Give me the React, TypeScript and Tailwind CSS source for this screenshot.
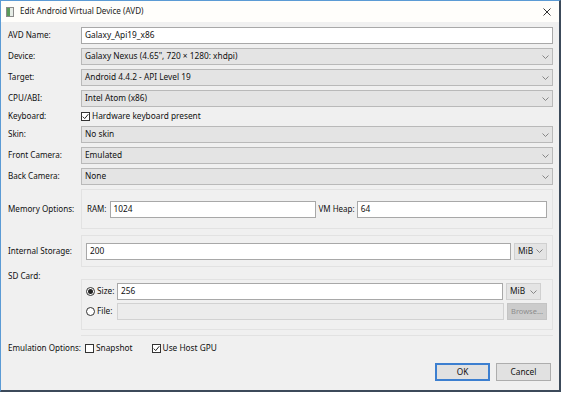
import React from "react";

const font = "font-['Noto_Sans','Liberation_Sans',sans-serif]";

function Chevron() {
  return (
    <svg width="7" height="4" viewBox="0 0 7 4" className="shrink-0">
      <path d="M0.5 0.5 L3.5 3.5 L6.5 0.5" fill="none" stroke="#7a7a7a" strokeWidth="0.9" />
    </svg>
  );
}

function Combo({ value, className = "" }: { value: string; className?: string }) {
  return (
    <div
      className={`h-[17px] border border-[#b9b9b9] bg-[#e4e4e4] flex items-center justify-between pl-[3px] pr-[3px] leading-none ${className}`}
    >
      <span>{value}</span>
      <Chevron />
    </div>
  );
}

function Input({ value = "", disabled = false, className = "" }: { value?: string; disabled?: boolean; className?: string }) {
  return (
    <div
      className={`h-[17px] border flex items-center px-[3px] leading-none ${
        disabled ? "border-[#d2d2d2] bg-[#ececec]" : "border-[#a8a8a8] bg-white"
      } ${className}`}
    >
      {value}
    </div>
  );
}

function Check({ checked, label }: { checked: boolean; label: string }) {
  return (
    <div className="flex items-center gap-[2px]">
      <div className="w-[9px] h-[9px] border border-[#333333] bg-white flex items-center justify-center">
        {checked && (
          <svg width="7" height="7" viewBox="0 0 7 7">
            <path d="M0.7 3.6 L2.7 5.6 L6.3 1.2" fill="none" stroke="#222222" strokeWidth="1" />
          </svg>
        )}
      </div>
      <span>{label}</span>
    </div>
  );
}

function Radio({ checked, label }: { checked: boolean; label: string }) {
  return (
    <div className="flex items-center gap-[2px] w-[31px] shrink-0">
      <div className="w-[9px] h-[9px] rounded-full border border-[#333333] bg-white flex items-center justify-center">
        {checked && <div className="w-[5px] h-[5px] rounded-full bg-[#222222]" />}
      </div>
      <span>{label}</span>
    </div>
  );
}

function Row({ label, children, className = "" }: { label: string; children: React.ReactNode; className?: string }) {
  return (
    <div className={`flex items-center ${className}`}>
      <div className="w-[73px] shrink-0 text-[8.1px]">{label}</div>
      <div className="flex-1 min-w-0">{children}</div>
    </div>
  );
}

export default function App() {
  return (
    <div className={`w-[564px] h-[394px] bg-white ${font} text-[8.3px] text-[#111111] whitespace-nowrap`}>
      <div className="w-[561px] h-[392px] flex flex-col border-l border-t border-[#5b9bd5] border-r-2 border-b-2 border-r-[#3c4a5a] border-b-[#3c4a5a]">
        {/* Title bar */}
        <div className="h-[21px] bg-[#fffefb] flex items-center pl-[5px] pr-[8px] shrink-0">
          <div className="w-[8px] h-[10px] border border-[#8a8a8a] bg-[#e6ece6] mr-[6px] flex">
            <div className="w-[3px] bg-[#5a9a5a]" />
          </div>
          <span className="text-[8.1px] flex-1 text-[#222222]">Edit Android Virtual Device (AVD)</span>
          <svg width="8" height="8" viewBox="0 0 8 8">
            <path d="M0.5 0.5 L7.5 7.5 M7.5 0.5 L0.5 7.5" stroke="#333333" strokeWidth="1" />
          </svg>
        </div>

        {/* Body */}
        <div className="flex-1 bg-[#f0f0f0] pl-[7px] pr-[6px] pt-[5px] flex flex-col">
          <Row label="AVD Name:">
            <Input value="Galaxy_Api19_x86" />
          </Row>
          <Row label="Device:" className="mt-[4px]">
            <Combo value={"Galaxy Nexus (4.65\", 720 \u00d7 1280: xhdpi)"} />
          </Row>
          <Row label="Target:" className="mt-[4px]">
            <Combo value="Android 4.4.2 - API Level 19" />
          </Row>
          <Row label="CPU/ABI:" className="mt-[4px]">
            <Combo value="Intel Atom (x86)" />
          </Row>
          <Row label="Keyboard:" className="mt-[2px] h-[15px]">
            <Check checked label="Hardware keyboard present" />
          </Row>
          <Row label="Skin:" className="mt-[2px]">
            <Combo value="No skin" />
          </Row>
          <Row label="Front Camera:" className="mt-[4px]">
            <Combo value="Emulated" />
          </Row>
          <Row label="Back Camera:" className="mt-[4px]">
            <Combo value="None" />
          </Row>

          <Row label="Memory Options:" className="mt-[4px]">
            <div className="h-[40px] border border-[#e2e2e2] flex items-center pl-[5px] pr-[5px] text-[8px]">
              <span className="mr-[3px]">RAM:</span>
              <Input value="1024" className="w-[206px] text-[8.3px]" />
              <span className="ml-[3px] mr-[2px]">VM Heap:</span>
              <Input value="64" className="flex-1 text-[8.3px]" />
            </div>
          </Row>

          <Row label="Internal Storage:" className="mt-[6px]">
            <div className="h-[32px] border border-[#e2e2e2] flex items-center pl-[4px] pr-[5px]">
              <Input value="200" className="flex-1" />
              <Combo value="MiB" className="w-[33px] ml-[3px] border-[#d0d0d0]" />
            </div>
          </Row>

          <div className="flex mt-[1px]">
            <div className="w-[73px] shrink-0 pt-[2px] text-[8.1px]">SD Card:</div>
            <div className="flex-1 mt-[11px] h-[51px] border border-[#e2e2e2] flex flex-col gap-[3px] pt-[3px] pl-[4px] pr-[5px]">
              <div className="flex items-center">
                <Radio checked label="Size:" />
                <Input value="256" className="flex-1" />
                <Combo value="MiB" className="w-[35px] ml-[3px] mr-[6px] border-[#d0d0d0]" />
              </div>
              <div className="flex items-center">
                <Radio checked={false} label="File:" />
                <Input disabled className="flex-1" />
                <div className="w-[40px] h-[17px] ml-[3px] border border-[#c4c4c4] bg-[#cccccc] text-[#8c8c8c] flex items-center justify-center text-[7.5px] leading-none">
                  Browse...
                </div>
              </div>
            </div>
          </div>

          <Row label="Emulation Options:" className="mt-[5px]">
            <div className="h-[26px] border-t border-[#e2e2e2] flex items-center pl-[4px] gap-[19px]">
              <Check checked={false} label="Snapshot" />
              <Check checked label="Use Host GPU" />
            </div>
          </Row>

          <div className="flex justify-end gap-[6px] mt-[2px] pr-[2px]">
            <div className="w-[55px] h-[18px] border-2 border-[#3c7fd0] bg-[#e1e1e1] flex items-center justify-center leading-none">
              OK
            </div>
            <div className="w-[55px] h-[18px] border border-[#adadad] bg-[#e1e1e1] flex items-center justify-center leading-none">
              Cancel
            </div>
          </div>
        </div>
      </div>
    </div>
  );
}
